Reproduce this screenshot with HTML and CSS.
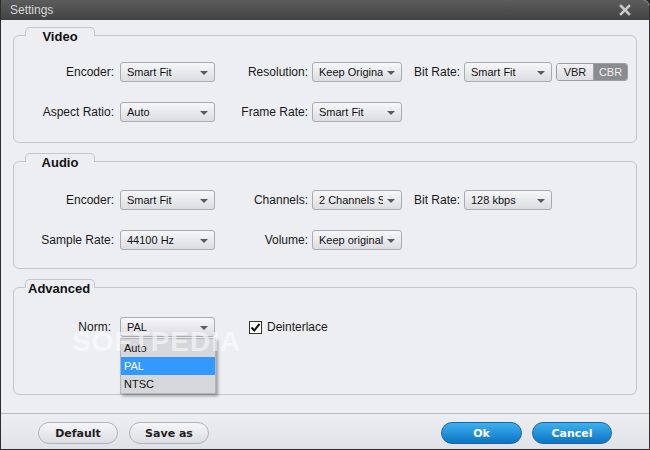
FILE: index.html
```html
<!DOCTYPE html>
<html>
<head>
<meta charset="utf-8">
<link rel="stylesheet" href="styles.css">
</head>
<body>
<div class="window">
  <div class="titlebar">
    <span class="title">Settings</span>
    <svg class="close" width="12" height="12" viewBox="0 0 12 12"><path d="M2 2 L10 10 M10 2 L2 10" stroke="#c8c8c8" stroke-width="2.6" stroke-linecap="square"/></svg>
  </div>
  <div class="content">
    <div class="group g-video">
      <div class="tab">Video</div>
      <div class="box">
        <div class="grid">
          <label class="lbl l1">Encoder:</label>
          <div class="dd"><span class="val">Smart Fit</span><i class="arrow"></i></div>
          <label class="lbl l2">Resolution:</label>
          <div class="dd"><span class="val">Keep Original</span><i class="arrow"></i></div>
          <label class="lbl l3">Bit Rate:</label>
          <div class="dd"><span class="val">Smart Fit</span><i class="arrow"></i></div>
          <div class="toggle"><span class="on">VBR</span><span class="off">CBR</span></div>
          <label class="lbl l1">Aspect Ratio:</label>
          <div class="dd"><span class="val">Auto</span><i class="arrow"></i></div>
          <label class="lbl l2">Frame Rate:</label>
          <div class="dd"><span class="val">Smart Fit</span><i class="arrow"></i></div>
        </div>
      </div>
    </div>
    <div class="group g-audio">
      <div class="tab">Audio</div>
      <div class="box">
        <div class="grid">
          <label class="lbl l1">Encoder:</label>
          <div class="dd"><span class="val">Smart Fit</span><i class="arrow"></i></div>
          <label class="lbl l2">Channels:</label>
          <div class="dd"><span class="val">2 Channels Stereo</span><i class="arrow"></i></div>
          <label class="lbl l3">Bit Rate:</label>
          <div class="dd"><span class="val">128 kbps</span><i class="arrow"></i></div>
          <div></div>
          <label class="lbl l1">Sample Rate:</label>
          <div class="dd"><span class="val">44100 Hz</span><i class="arrow"></i></div>
          <label class="lbl l2">Volume:</label>
          <div class="dd"><span class="val">Keep original</span><i class="arrow"></i></div>
        </div>
      </div>
    </div>
    <div class="group g-adv">
      <div class="tab">Advanced</div>
      <div class="box">
        <div class="adv-row">
          <label class="lbl norm">Norm:</label>
          <div class="dd dd-open"><span class="val">PAL</span><i class="arrow"></i>
            <ul class="menu">
              <li>Auto</li>
              <li class="sel">PAL</li>
              <li>NTSC</li>
            </ul>
          </div>
          <div class="check">
            <span class="cb"><svg width="11" height="11" viewBox="0 0 11 11"><path d="M1.5 5.5 L4.3 8.5 L9.5 1.8" fill="none" stroke="#111" stroke-width="2"/></svg></span>
            <span>Deinterlace</span>
          </div>
        </div>
        <div class="watermark">SOFTPEDIA</div>
      </div>
    </div>
  </div>
  <div class="footer">
    <div class="left">
      <button class="btn gray">Default</button>
      <button class="btn gray">Save as</button>
    </div>
    <div class="right">
      <button class="btn blue">Ok</button>
      <button class="btn blue">Cancel</button>
    </div>
  </div>
</div>
</body>
</html>
```

FILE: styles.css
```css
* { box-sizing: border-box; }
html, body { margin: 0; padding: 0; }
body {
  width: 650px; height: 450px; overflow: hidden;
  font-family: "Liberation Sans", Arial, sans-serif;
  background: #2a2a2a;
}
.window {
  width: 650px; height: 450px;
  background: #eceef2;
  border: 1px solid #2e2e2e;
  border-top: none;
  border-radius: 0 6px 0 0;
  display: flex; flex-direction: column;
  overflow: hidden;
}
.titlebar {
  height: 20px; flex: none;
  background: linear-gradient(#5c5c5c, #434343);
  display: flex; align-items: center; justify-content: space-between;
  padding: 0 18px 0 9px;
  color: #d6d6d6; font-size: 12px;
  border-radius: 0 6px 0 0;
}
.title { line-height: 20px; }
.close { display: block; }
.content {
  flex: 1;
  padding: 7px 12px 0 12px;
  display: flex; flex-direction: column;
}
.group { display: flex; flex-direction: column; }
.g-audio { margin-top: 10px; }
.g-adv { margin-top: 10px; }
.tab {
  position: relative; z-index: 1;
  width: 70px; height: 9px;
  margin-left: 12px; margin-bottom: -1px;
  border: 1px solid #c4c6cb; border-bottom: none;
  border-radius: 5px 5px 0 0;
  background: #eceef2;
  font-weight: bold; font-size: 13px; color: #111;
  line-height: 17px; text-align: center;
  white-space: nowrap;
}
.g-adv .tab { text-align: left; padding-left: 2px; }
.box {
  position: relative;
  border: 1px solid #c4c6cb;
  border-radius: 6px;
  background: #eceef2;
}
.g-video .box { height: 108px; padding-top: 26px; }
.g-audio .box { height: 108px; padding-top: 28px; }
.g-adv .box { height: 108px; padding-top: 29px; }
.grid {
  display: grid;
  grid-template-columns: 106px 95px 97px 90px 62px 88px 76px;
  grid-auto-rows: 20px;
  row-gap: 20px;
  align-items: center;
}
.lbl {
  font-size: 12px; color: #1a1a1a;
  text-align: right; white-space: nowrap;
  line-height: 20px;
}
.l1 { padding-right: 6px; }
.l2 { padding-right: 4px; }
.l3 { padding-right: 4px; }
.dd {
  position: relative;
  height: 20px;
  border: 1px solid #a9abb1;
  border-radius: 3px;
  background: linear-gradient(#f7f7f9, #dcdde1);
  display: flex; align-items: center;
  padding: 0 18px 0 6px;
  font-size: 11px; color: #111;
}
.val { white-space: nowrap; overflow: hidden; display: block; line-height: 18px; }
.arrow {
  position: absolute; right: 6px; top: 8px;
  width: 0; height: 0;
  border-left: 4px solid transparent;
  border-right: 4px solid transparent;
  border-top: 4px solid #5a5a5a;
}
.toggle {
  margin-left: 4px; width: 72px; height: 18px;
  display: flex;
  border: 1px solid #9c9ea3; border-radius: 3px;
  overflow: hidden; font-size: 11px;
}
.toggle span { display: flex; align-items: center; justify-content: center; }
.toggle .on { width: 37px; background: linear-gradient(#f2f2f4, #dcdde0); color: #1a1a1a; border-right: 1px solid #a0a0a0; }
.toggle .off { flex: 1; background: #8b8c8f; color: #eeeeee; }
.adv-row { display: flex; align-items: center; height: 20px; }
.norm { width: 106px; padding-right: 9px; }
.dd-open { width: 95px; }
.menu {
  position: absolute; left: -1px; top: 20px;
  width: 96px; margin: 0; padding: 0; list-style: none;
  background: #d6d7db;
  border: 1px solid #b4b5b9;
  box-shadow: 2px 2px 3px rgba(0,0,0,0.35);
  z-index: 5;
}
.menu li { height: 18px; line-height: 18px; padding-left: 3px; font-size: 11px; color: #111; }
.menu li.sel { background: #3399ff; color: #fff; }
.check { display: flex; align-items: center; margin-left: 34px; font-size: 12px; color: #1a1a1a; gap: 5px; }
.cb {
  width: 13px; height: 13px;
  border: 1px solid #333; background: #fff;
  display: flex; align-items: center; justify-content: center;
}
.cb svg { display: block; }
.watermark {
  position: absolute; left: 58px; top: 40px;
  font-size: 28px; font-weight: bold; letter-spacing: 1px;
  color: rgba(255,255,255,0.55);
  pointer-events: none; z-index: 6;
  line-height: 28px;
  font-family: "Liberation Sans", Arial, sans-serif;
}
.footer {
  height: 36px; flex: none;
  border-top: 1px solid #b9babe;
  background: linear-gradient(#eceef2, #e1e2e7);
  display: flex; justify-content: space-between; align-items: center;
  padding: 3px 37px 0 37px;
}
.left, .right { display: flex; gap: 11px; }
.btn {
  height: 22px; width: 80px;
  border-radius: 11px;
  font-family: "DejaVu Sans", Verdana, sans-serif;
  font-weight: bold; font-size: 11px;
  padding: 0; cursor: default;
}
.gray {
  background: linear-gradient(#f6f6f8, #dcdde2);
  border: 1px solid #b3b4ba; color: #222;
}
.blue {
  background: linear-gradient(#3fb0ef, #0b74c4);
  border: 1px solid #1966a6; color: #fff;
}
.right { gap: 10px; }
.right .btn:first-child { width: 81px; }
```
